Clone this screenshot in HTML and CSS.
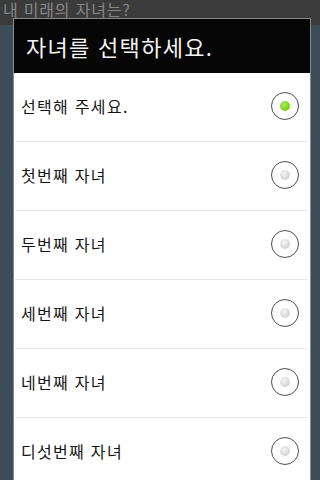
FILE: index.html
```html
<!DOCTYPE html>
<html lang="ko">
<head>
<meta charset="utf-8">
<link rel="stylesheet" href="styles.css">
</head>
<body>
<div class="screen">
  <div class="appbar"><span class="apptitle">내 미래의 자녀는?</span></div>
  <div class="content"></div>
</div>
<div class="dialog">
  <div class="title">자녀를 선택하세요.</div>
  <ul class="list">
    <li class="row"><span class="label">선택해 주세요.</span><span class="radio checked"></span></li>
    <li class="row"><span class="label">첫번째 자녀</span><span class="radio"></span></li>
    <li class="row"><span class="label">두번째 자녀</span><span class="radio"></span></li>
    <li class="row"><span class="label">세번째 자녀</span><span class="radio"></span></li>
    <li class="row"><span class="label">네번째 자녀</span><span class="radio"></span></li>
    <li class="row"><span class="label">디섯번째 자녀</span><span class="radio"></span></li>
  </ul>
</div>
</body>
</html>
```
FILE: styles.css
```css
html, body {
  margin: 0;
  padding: 0;
  width: 320px;
  height: 480px;
  overflow: hidden;
  font-family: "Noto Sans CJK KR", "Noto Sans", sans-serif;
}
.screen {
  display: flex;
  flex-direction: column;
  height: 480px;
  background: #3e525c;
}
.appbar {
  height: 25px;
  background: #3b3b3b;
  padding-left: 3px;
  box-sizing: border-box;
}
.apptitle {
  display: block;
  height: 18px;
  color: #858585;
  font-size: 16px;
  line-height: 18px;
  letter-spacing: 0.8px;
}
.content {
  flex: 1;
  background: linear-gradient(90deg, #3b4d57 0%, #42565f 50%, #3b4d57 100%);
}
.dialog {
  position: absolute;
  left: 13px;
  top: 18px;
  width: 298px;
  box-sizing: border-box;
  border: 1px solid #8a8a8a;
  border-bottom: none;
  background: #ffffff;
}
.title {
  height: 54px;
  background: #060606;
  color: #f4f4f4;
  font-size: 22px;
  line-height: 54px;
  padding-left: 12px;
  letter-spacing: 1.3px;
}
.list {
  list-style: none;
  margin: 0;
  padding: 0 2px 0 1px;
  background: #ffffff;
}
.row {
  height: 69px;
  display: flex;
  align-items: center;
  justify-content: space-between;
  padding: 0 9px 2px 6px;
  border-bottom: 1px solid #e8e8e8;
  box-sizing: border-box;
}
.label {
  font-size: 16px;
  color: #151515;
  letter-spacing: 1.3px;
}
.radio {
  width: 26px;
  height: 26px;
  border-radius: 50%;
  border: 1.5px solid #4e4e4e;
  display: flex;
  align-items: center;
  justify-content: center;
  background: #ffffff;
}
.radio::after {
  content: "";
  width: 10px;
  height: 10px;
  border-radius: 50%;
  background: radial-gradient(circle at 40% 35%, #f4f4f4 0%, #d8d8d8 60%, #c8c8c8 100%);
}
.radio.checked::after {
  background: radial-gradient(circle at 40% 35%, #a6ee4e 0%, #7fd41f 60%, #6cbf14 100%);
}
```
